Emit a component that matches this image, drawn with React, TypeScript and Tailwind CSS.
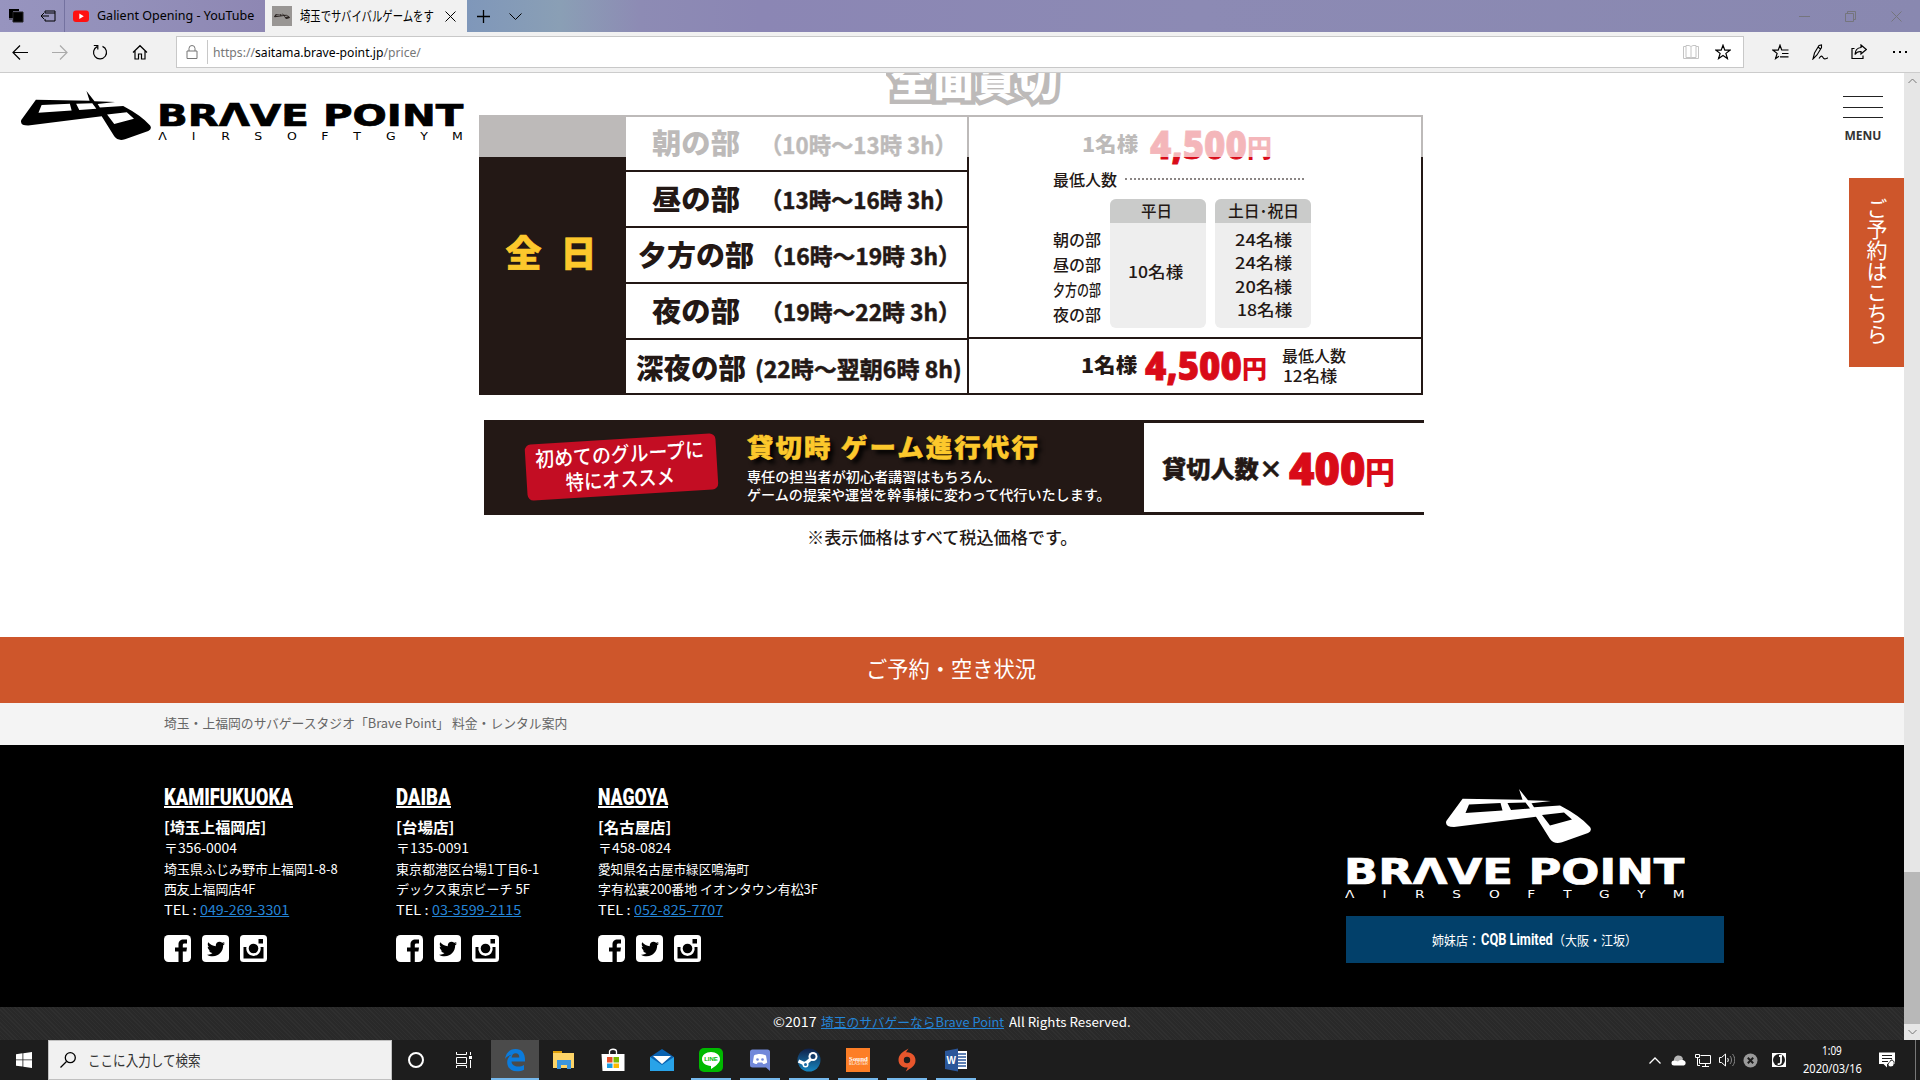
import React, { useLayoutEffect, useRef, useState } from "react";
import { FaTwitter } from "react-icons/fa";

/** Single-line text stretched horizontally so that it fills `w` pixels. */
function Fit({ w, className = "", children }: { w: number; className?: string; children: React.ReactNode }) {
  const ref = useRef<HTMLSpanElement>(null);
  const [scale, setScale] = useState(1);
  useLayoutEffect(() => {
    if (ref.current && ref.current.offsetWidth) setScale(w / ref.current.offsetWidth);
  }, [w]);
  return (
    <span className={"block shrink-0 whitespace-pre text-left " + className} style={{ width: w }}>
      <span ref={ref} className="inline-block origin-left" style={{ transform: `scaleX(${scale})` }}>
        {children}
      </span>
    </span>
  );
}

function Mark({ className }: { className: string }) {
  return (
    <svg viewBox="0 0 145 54" preserveAspectRatio="none" className={className} fill="currentColor">
      <path
        fillRule="evenodd"
        d="M16.6 9.7 L76.5 10.8 L73 0 L82 11.2 L105 12 L85.5 14.3 L88 18.3 L114 16.6 Q134 27 144 38 Q146.500 42 142 44 L116 53.200 Q108 55.500 104 50 L90 27.700 L8 38 Q-1.500 38 .3 32 Z M23 15.500 L54.500 14 L56.500 21.500 L19.500 24 Z M61.500 14 L79.500 13.500 L84 19.500 L65 21 Z M96 26 L118 23.500 L126 30.500 L104 36.500 Z"
      />
    </svg>
  );
}

const stroke = { fill: "none", stroke: "currentColor" } as const;

function TitleBar() {
  return (
    <div className="relative flex h-8 items-center bg-[linear-gradient(90deg,#9794bf_0px,#9390ba_120px,#8e87b3_265px,#7f97ba_467px,#8a9fb5_560px,#8d8bb4_640px,#8b86b4_760px,#8c8ab4_1200px,#8988b0_1920px)] text-black">
      <svg className="ml-2 h-4 w-4" viewBox="0 0 16 16">
        <path d="M1 1h10v2H5v7H1z" fill="#000" />
        <path d="M5 4h10v10H5zM1 11h3" fill="#000" stroke="#222" />
      </svg>
      <svg className="ml-4 h-4 w-4" viewBox="0 0 16 16" {...stroke}>
        <path d="M5 5V3h10v10H5v-2M5 5h10M1 8h8M4 5L1 8l3 3" />
      </svg>
      <div className="ml-2 h-8 w-px bg-[#7472a0]" />
      <div className="flex h-8 w-[200px] items-center pl-2">
        <svg className="h-4 w-4" viewBox="0 0 16 16">
          <rect y="2.500" width="16" height="11.500" rx="3" fill="#f11" />
          <path d="M6.300 5.500l4.500 2.700-4.500 2.700z" fill="#fff" />
        </svg>
        <Fit w={157} className="ml-2 text-[13px]">Galient Opening - YouTube</Fit>
      </div>
      <div className="flex h-8 w-[202px] items-center bg-[#f1f1f1] pl-[7px]">
        <div className="flex h-5 w-5 items-center justify-center bg-[#999694]">
          <Mark className="h-[6px] w-4 text-[#2b2422]" />
        </div>
        <Fit w={134} className="-mt-0.5 ml-2 text-[14px]">埼玉でサバイバルゲームをす</Fit>
        <svg className="ml-[11px] h-[11px] w-[11px]" viewBox="0 0 11 11" {...stroke}><path d="M.5.5l10 10M10.500.5l-10 10" /></svg>
      </div>
      <svg className="ml-[10px] h-[13px] w-[13px]" viewBox="0 0 13 13" {...stroke}><path d="M6.500 0v13M0 6.500h13" strokeWidth="1.300" /></svg>
      <svg className="ml-[19px] h-[7px] w-[13px]" viewBox="0 0 13 7" {...stroke}><path d="M.5.5l6 6 6-6" /></svg>
      <div className="ml-auto mr-[18px] flex items-center text-[#75757d]">
        <svg className="h-[11px] w-[11px]" viewBox="0 0 11 11" {...stroke}><path d="M0 5.500h11" /></svg>
        <svg className="ml-[35px] h-[11px] w-[11px]" viewBox="0 0 11 11" {...stroke}><path d="M.5 2.500h8v8h-8zM2.500 2.500v-2h8v8h-2" /></svg>
        <svg className="ml-[35px] h-[11px] w-[11px]" viewBox="0 0 11 11" {...stroke}><path d="M.5.5l10 10M10.500.5l-10 10" /></svg>
      </div>
    </div>
  );
}

function ToolBar() {
  return (
    <div className="flex h-[41px] items-start border-b border-[#cccccc] bg-[#f1f1f1] text-black">
      <div className="flex h-10 w-[176px] items-center">
        <svg className="ml-3 h-4 w-4" viewBox="0 0 16 16" {...stroke} strokeWidth="1.200"><path d="M1 8.500h15M8 1.500l-7 7 7 7" /></svg>
        <svg className="ml-6 h-4 w-4 text-[#aaa]" viewBox="0 0 16 16" {...stroke} strokeWidth="1.200"><path d="M0 8.500h15M8 1.500l7 7-7 7" /></svg>
        <svg className="ml-6 h-4 w-4" viewBox="0 0 16 16" {...stroke} strokeWidth="1.200"><path d="M10.500 2.400a6.500 6.500 0 1 1-5.400.2M1.800 1.500h4v4" /></svg>
        <svg className="ml-6 h-4 w-4" viewBox="0 0 16 16" {...stroke} strokeWidth="1.200"><path d="M1 8.500L8 1.700l7 6.800M3 7v8h3.500v-5h3v5H13V7" /></svg>
      </div>
      <div className="mt-1 flex h-8 w-[1568px] items-center border border-[#c8c8c8] bg-white">
        <svg className="ml-[9px] h-[14px] w-[12px] text-[#777]" viewBox="0 0 12 14" {...stroke}><path d="M1 6h10v7.500H1zM3 6V3.500a3 3 0 0 1 6 0V6" /></svg>
        <div className="ml-[9px] h-6 w-px bg-[#c8c8c8]" />
        <Fit w={208} className="ml-[5px] text-[13px] leading-[30px] text-[#777]">
          https://<span className="text-black">saitama.brave-point.jp</span>/price/
        </Fit>
        <svg className="ml-auto h-[14px] w-4 text-[#c4c4c4]" viewBox="0 0 16 14" {...stroke}><path d="M8 2v11M8 1.500L6 .5H3v12h4l1 .5 1-.5h4V.5h-3zM3 1.500H.5v12h15v-12H13" /></svg>
        <svg className="ml-4 mr-3 h-4 w-4" viewBox="0 0 16 16" {...stroke} strokeWidth="1.200"><path d="M8 1.200l1.800 4.900 5.200.1-4.100 3.200 1.500 5.100L8 11.500l-4.400 3 1.500-5.100L1 6.200l5.200-.1z" /></svg>
      </div>
      <div className="ml-7 flex h-10 items-center">
        <svg className="h-4 w-[17px]" viewBox="0 0 17 16" {...stroke} strokeWidth="1.200"><path d="M16.500 6H9.700L8 1.200 6.200 6.100 1 6.200l4.100 3.200-1.500 5.100L7 12.200M10 9.500h6.500M8 12.800h8.500" /></svg>
        <svg className="ml-[23px] h-4 w-4" viewBox="0 0 16 16" {...stroke} strokeWidth="1.100"><path d="M1 15l1.500-6L7 1.500l2.500-.5v2.500L5 11 1 15zM6 3l2.500 2M7 14.500c2-3 3-3 4-1s2 1.500 5 .3" /></svg>
        <svg className="ml-[23px] h-4 w-4" viewBox="0 0 16 16" {...stroke} strokeWidth="1.200"><path d="M3.500 4.500H1v10h11v-3M10 1l5.300 4.500L10 10V7.500C7 7.300 5.500 8 4 10.500 4.200 6 6.500 3.800 10 3.500z" /></svg>
        <svg className="ml-[26px] h-4 w-[15px]" viewBox="0 0 15 16"><path d="M0 7h2v2H0zM6 7h2v2H6zM12 7h2v2h-2z" /></svg>
      </div>
    </div>
  );
}

function Wordmark({ w, big, small }: { w: number; big: string; small: string }) {
  return (
    <div className="font-['DejaVu_Sans',sans-serif]">
      <Fit w={w + 3} className={"-ml-[2px] font-bold [-webkit-text-stroke:0.7px_currentColor] " + big}>BRΛVE POINT</Fit>
      <div className={"flex justify-between " + small} style={{ width: w }}>
        {"ΛIRSOFTGYM".split("").map((c, i) => (<span key={i} className="block scale-x-125">{c}</span>))}
      </div>
    </div>
  );
}

const slots = [
  { name: "朝の部", nl: 26, nw: 88, time: "（10時～13時 3h）", gap: 20, tw: 197 },
  { name: "昼の部", nl: 26, nw: 88, time: "（13時～16時 3h）", gap: 20, tw: 197 },
  { name: "夕方の部", nl: 12, nw: 116, time: "（16時～19時 3h）", gap: 6, tw: 201 },
  { name: "夜の部", nl: 26, nw: 88, time: "（19時～22時 3h）", gap: 20, tw: 201 },
  { name: "深夜の部", nl: 10, nw: 110, time: "(22時～翌朝6時 8h)", gap: 9, tw: 207 },
];

function Price({ lead }: { lead: number }) {
  return (
    <div className="flex items-center text-[#231815]">
      <Fit w={56} className="text-[20px] font-black leading-[34px]">1名様</Fit>
      <div style={{ width: lead }} />
      <Fit w={97} className="font-['Open_Sans',sans-serif] text-[38px] font-extrabold leading-[34px] text-[#d90b18] [-webkit-text-stroke:0.8px_#d90b18]">4,500</Fit>
      <Fit w={25} className="pt-1 text-[25px] font-black leading-[34px] text-[#d90b18]">円</Fit>
    </div>
  );
}

function PriceTable() {
  return (
    <div className="ml-[479px] flex h-[280px] w-[944px] border-2 border-[#231815] text-[#231815]">
      <div className="flex w-[145px] items-center justify-center gap-[19px] bg-[#231815] pb-[9px] pr-[5px] text-[36px] font-black leading-[40px] text-[#fcc82c] [-webkit-text-stroke:0.6px_#fcc82c]">
        <span>全</span>
        <span>日</span>
      </div>
      <div className="w-[342px]">
        {slots.map((s) => (
          <div key={s.name} className="flex h-14 items-center border-b-2 border-[#231815] pb-[3px] first:h-[55px] first:pb-[3px] last:h-[53px] last:border-b-0 last:pb-0">
            <div style={{ width: s.nl }} />
            <Fit w={s.nw} className="text-[28px] font-black leading-[40px]">{s.name}</Fit>
            <div style={{ width: s.gap }} />
            <Fit w={s.tw} className="pt-[3px] text-[23px] font-bold leading-[38px] [-webkit-text-stroke:0.5px_#231815]">{s.time}</Fit>
          </div>
        ))}
      </div>
      <div className="-ml-px flex-1 border-l-2 border-[#231815] text-[16px] font-medium">
        <div className="h-[222px] border-b-2 border-[#231815] pt-[8px]">
          <div className="pl-[113px]"><Price lead={12} /></div>
          <div className="flex h-5 items-center pl-[84px] pt-[12px]">
            <Fit w={64}>最低人数</Fit>
            <div className="ml-2 h-0 w-[179px] border-t-2 border-dotted border-[#8b8685]" />
          </div>
          <div className="mt-[16px] flex pl-[84px] leading-[25px]">
            <div className="w-[57px] pt-[28px]">
              <Fit w={48}>朝の部</Fit>
              <Fit w={48}>昼の部</Fit>
              <Fit w={48}>夕方の部</Fit>
              <Fit w={48}>夜の部</Fit>
            </div>
            <div className="h-[129px] w-24 overflow-hidden rounded-md bg-[#eee]">
              <div className="flex h-6 items-center justify-center bg-[#cacbca] pb-px pr-1"><Fit w={31}>平日</Fit></div>
              <Fit w={55} className="ml-[18px] mt-9">10名様</Fit>
            </div>
            <div className="ml-[9px] h-[129px] w-24 overflow-hidden rounded-md bg-[#eee]">
              <div className="flex h-6 items-center justify-center bg-[#cacbca] pb-px"><Fit w={71}>土日･祝日</Fit></div>
              <div className="flex flex-col items-end pr-[19px] pt-[5px] leading-[23.400px]">
                <Fit w={57}>24名様</Fit>
                <Fit w={57}>24名様</Fit>
                <Fit w={57}>20名様</Fit>
                <Fit w={55}>18名様</Fit>
              </div>
            </div>
          </div>
        </div>
        <div className="flex pl-[112px] pt-[6px]">
          <Price lead={8} />
          <div className="mt-px ml-[15px] leading-[19.500px]">
            <Fit w={64}>最低人数</Fit>
            <Fit w={54} className="ml-[1px]">12名様</Fit>
          </div>
        </div>
      </div>
    </div>
  );
}

function Banner() {
  return (
    <div className="ml-[484px] mt-[25px] flex h-[95px] w-[940px] text-white">
      <div className="flex w-[660px] bg-[#231815]">
        <div className="ml-[42px] mt-[19px] h-[56px] w-[191px] -rotate-[3.500deg] rounded-md bg-[#c30d23] pt-[2px] text-[21px] font-medium leading-[25px]">
          <Fit w={169} className="ml-[10px]">初めてのグループに</Fit>
          <Fit w={109} className="ml-[39px]">特にオススメ</Fit>
        </div>
        <div className="ml-[30px] pt-[7px]">
          <Fit w={293} className="text-[25px] font-black leading-[38px] tracking-[2px] text-[#fcc82c] [-webkit-text-stroke:0.5px_#fcc82c] [text-shadow:4px_4px_4px_#000]">貸切時 ゲーム進行代行</Fit>
          <Fit w={254} className="mt-[2px] text-[14px] font-medium leading-[18px]">専任の担当者が初心者講習はもちろん、</Fit>
          <Fit w={363} className="text-[14px] font-medium leading-[18px]">ゲームの提案や運営を幹事様に変わって代行いたします。</Fit>
        </div>
      </div>
      <div className="flex flex-1 items-center border-y-[3px] border-[#231815] pl-[18px] text-[#231815]">
        <Fit w={121} className="text-[24px] font-black leading-[40px] [-webkit-text-stroke:0.4px_#231815]">貸切人数×</Fit>
        <Fit w={76} className="ml-[6px] font-['Open_Sans',sans-serif] text-[44px] font-extrabold leading-[40px] text-[#d90b18] [-webkit-text-stroke:1px_#d90b18]">400</Fit>
        <Fit w={30} className="pt-1 text-[30px] font-black leading-[40px] text-[#d90b18]">円</Fit>
      </div>
    </div>
  );
}

const shops = [
  { en: "KAMIFUKUOKA", ew: 129, jp: "[埼玉上福岡店]", jw: 102, lines: [["〒356-0004", 73], ["埼玉県ふじみ野市上福岡1-8-8", 174], ["西友上福岡店4F", 91]], tel: "049-269-3301", w: 232 },
  { en: "DAIBA", ew: 55, jp: "[台場店]", jw: 58, lines: [["〒135-0091", 73], ["東京都港区台場1丁目6-1", 143], ["デックス東京ビーチ 5F", 134]], tel: "03-3599-2115", w: 202 },
  { en: "NAGOYA", ew: 70, jp: "[名古屋店]", jw: 73, lines: [["〒458-0824", 73], ["愛知県名古屋市緑区鳴海町", 151], ["字有松裏200番地 イオンタウン有松3F", 220]], tel: "052-825-7707", w: 260 },
];

function Footer() {
  return (
    <div className="flex h-[262px] bg-black pl-[164px] text-white">
      {shops.map((s) => (
        <div key={s.en} className="pt-[40px] text-[13px] leading-[20.500px]" style={{ width: s.w }}>
          <div className="border-b-2 border-white" style={{ width: s.ew }}>
            <Fit w={s.ew} className="h-[21px] font-['Roboto',sans-serif] text-[24px] font-black leading-[24px]">{s.en}</Fit>
          </div>
          <Fit w={s.jw} className="mt-[8px] text-[15px] font-bold leading-[22px]">{s.jp}</Fit>
          {s.lines.map(([t, w]) => (<Fit key={t} w={w as number}>{t}</Fit>))}
          <div className="flex">
            <Fit w={36}>TEL : </Fit>
            <Fit w={89} className="text-[#2484d6] [&>span]:underline">{s.tel}</Fit>
          </div>
          <div className="mt-[15px] flex gap-[11px]">
            <svg className="h-[27px] w-[27px]" viewBox="0 0 27 27">
              <rect width="27" height="27" rx="4.500" fill="#fff" />
              <path d="M14.500 27V16.500H11v-4h3.500V9.500c0-3.500 2-5 5-5H23v4h-2.300c-1.500 0-1.900.6-1.900 1.800v2.200H23l-.6 4h-3.600V27z" fill="#000" />
            </svg>
            <div className="flex h-[27px] w-[27px] items-center justify-center rounded bg-white text-black">
              <FaTwitter className="h-[18px] w-[18px]" />
            </div>
            <svg className="h-[27px] w-[27px]" viewBox="0 0 27 27">
              <rect width="27" height="27" rx="3.500" fill="#fff" />
              <path d="M18.500 4h4.500v4.500h-4.500zM3.500 12h3a7.200 7.200 0 1 0 14 0h3v11.500h-20z" fill="#000" />
              <circle cx="13.500" cy="13.500" r="4.800" fill="#000" />
            </svg>
          </div>
        </div>
      ))}
      <div className="ml-[488px] pt-11">
        <Mark className="ml-[100px] h-[54px] w-[145px]" />
        <div className="mt-[11px]">
          <Wordmark w={338} big="text-[35px] leading-[36px] h-[36px]" small="mt-0 text-[11px] leading-[9px]" />
        </div>
        <div className="mt-[17px] flex h-[47px] w-[378px] items-center bg-[#02406a] pl-[86px] text-[13px]">
          <Fit w={48}>姉妹店：</Fit>
          <Fit w={72} className="ml-[1px] font-['Roboto',sans-serif] text-[16px] font-bold">CQB Limited</Fit>
          <Fit w={84}>（大阪・江坂）</Fit>
        </div>
      </div>
    </div>
  );
}

function Page() {
  return (
    <div className="relative flow-root h-[967px] w-[1904px] shrink-0 overflow-hidden bg-white font-['Noto_Sans_CJK_JP',sans-serif]">
      <div className="flow-root h-[42px] pl-[891px]">
        <Fit w={167} className="-mt-[25px] text-[42px] font-black leading-[60px] text-white [-webkit-text-stroke:9px_#231815] [paint-order:stroke_fill]">全面貸切</Fit>
      </div>
      <PriceTable />
      <Banner />
      <Fit w={270} className="ml-[807px] mt-[11px] text-[17px] font-medium leading-[22px] text-[#231815]">※表示価格はすべて税込価格です。</Fit>
      <div className="mt-[89px] flex h-[66px] items-center justify-center bg-[#ce562b] pb-[5px] text-[22px] text-white">
        <Fit w={170} className="-ml-[3px]">ご予約・空き状況</Fit>
      </div>
      <div className="flex h-[42px] items-center bg-[#f4f4f4] pl-[164px] text-[13px] text-[#666]">
        <Fit w={403} className="-mt-0.5">埼玉・上福岡のサバゲースタジオ「Brave Point」 料金・レンタル案内</Fit>
      </div>
      <Footer />
      <div className="flex h-[33px] items-center bg-[#2b2b2b] bg-[repeating-linear-gradient(45deg,#2f2f2f_0px,#2f2f2f_1px,#292929_1px,#292929_3px)] pl-[773px] text-[13px] text-white">
        <Fit w={44} className="-mt-1">©2017</Fit>
        <Fit w={183} className="-mt-1 ml-1 text-[#2484d6] [&>span]:underline">埼玉のサバゲーならBrave Point</Fit>
        <Fit w={122} className="-mt-1 ml-[5px]">All Rights Reserved.</Fit>
      </div>

      <div className="absolute inset-x-0 top-0 flex h-[84px] bg-white/70 text-black">
        <Mark className="ml-[21px] mt-[18px] h-[49px] w-[130px]" />
        <div className="ml-2 mt-[26px]">
          <Wordmark w={303} big="text-[31px] leading-[32px] h-[32px]" small="mt-[2px] text-[10px] leading-[8px]" />
        </div>
        <div className="ml-auto mr-[21px] flex w-10 flex-col items-center pt-[23px]">
          <div className="h-px w-10 bg-[#222]" />
          <div className="mt-[10px] h-px w-10 bg-[#222]" />
          <div className="mt-[9px] h-px w-10 bg-[#222]" />
          <Fit w={37} className="mt-[10px] font-['Open_Sans',sans-serif] text-[12px] font-bold leading-[16px] text-[#333]">MENU</Fit>
        </div>
      </div>
      <div className="absolute right-0 top-[105px] flex h-[189px] w-[55px] justify-center bg-[#ce562b] pb-[2px] text-[21px] leading-[55px] text-white [writing-mode:vertical-rl]">
        ご予約はこちら
      </div>
    </div>
  );
}

function ScrollBar() {
  return (
    <div className="flex h-[967px] w-4 flex-col items-center bg-[#e6e6e6] text-[#777]">
      <svg className="mt-[5px] h-[6px] w-[9px]" viewBox="0 0 9 6" {...stroke}><path d="M.5 5l4-4 4 4" /></svg>
      <div className="mt-[788px] h-[152px] w-4 bg-[#b8b8b8]" />
      <svg className="mt-[5px] h-[6px] w-[9px]" viewBox="0 0 9 6" {...stroke}><path d="M.5 1l4 4 4-4" /></svg>
    </div>
  );
}

const apps: { id: string; open: boolean; icon: React.ReactNode }[] = [
  { id: "edge", open: true, icon: <path d="M2 11C3 4.500 7 1 12.500 1 19 1 22.500 5.500 22 13.500H8.500c.2 3.500 3.300 5 6.500 5 2.300 0 4.300-.5 6-1.500v4.800c-2 1-4.300 1.500-7 1.500-6 0-9.800-3.500-9.800-9 0-3.300 1.600-6 4.500-7.500-3 .6-5.200 2-6.700 4.200zM8.600 9.500h7.700c0-3-1.400-4.300-3.600-4.300-2.300 0-3.700 1.500-4.100 4.300z" fill="#0b7bdc" fillRule="evenodd" /> },
  { id: "files", open: false, icon: <><path d="M1 3h9v4H1z" fill="#e0a008" /><path d="M1 5h21v15H1z" fill="#fdd467" /><path d="M5 12h14v9h-4v-4H9v4H5z" fill="#3b95dd" /></> },
  { id: "store", open: false, icon: <><path d="M8.500 7V3.500C8.500.5 15.500.5 15.500 3.500V7" fill="none" stroke="#fff" strokeWidth="1.300" /><path d="M.5 6h23v17H1.500z" fill="#fff" /><path d="M6 9h5.500v5.500H6z" fill="#e8502a" /><path d="M12.500 9H18v5.500h-5.500z" fill="#7eb900" /><path d="M6 15.500h5.500V20H6z" fill="#1b9de2" /><path d="M12.500 15.500H18V20h-5.500z" fill="#fdb900" /></> },
  { id: "mail", open: false, icon: <><path d="M0 9L12 1l12 8v14H0z" fill="#0a62b0" /><path d="M3 8h18l-9 8z" fill="#fff" /><path d="M0 9l12 8 12-8v14H0z" fill="#29a3e8" /></> },
  { id: "line", open: true, icon: <><rect width="24" height="24" rx="5" fill="#00b900" /><path d="M12 4c5 0 9 3 9 7 0 4.500-6 8-9 10v-3c-5-.3-9-3-9-7s4-7 9-7z" fill="#fff" /><text x="12" y="13.300" fontSize="6" fontWeight="700" fill="#00b900" textAnchor="middle" fontFamily="Liberation Sans">LINE</text></> },
  { id: "discord", open: true, icon: <><path d="M4.500 1.500h15a2.500 2.500 0 0 1 2.500 2.500v19l-4-3.500H4.500A2.500 2.500 0 0 1 2 17V4a2.500 2.500 0 0 1 2.500-2.500z" fill="#7289da" /><path d="M6 7.500c3-2 9-2 12 0l1.200 7c-1.600 1.300-3 1.500-4 1.500l-1-1.500H9.800l-1 1.500c-1 0-2.400-.2-4-1.500z" fill="#fff" /><circle cx="9.500" cy="11.500" r="1.300" fill="#7289da" /><circle cx="14.500" cy="11.500" r="1.300" fill="#7289da" /></> },
  { id: "steam", open: true, icon: <><defs><linearGradient id="st" x2="0" y2="1"><stop stopColor="#102048" /><stop offset="1" stopColor="#1686c0" /></linearGradient></defs><circle cx="12" cy="12" r="11.500" fill="url(#st)" /><path d="M1.500 13l6.500 3 7-6" stroke="#fff" strokeWidth="3.500" fill="none" /><circle cx="16" cy="8.500" r="4.500" fill="#fff" /><circle cx="16" cy="8.500" r="2.500" fill="#123a68" /><circle cx="8.500" cy="16.500" r="3" fill="#fff" /><circle cx="8.500" cy="16.500" r="1.500" fill="#1a6aa5" /></> },
  { id: "sound", open: true, icon: <><path d="M0 0h24v24H0z" fill="#fd7e26" /><text x="3" y="12.500" fontSize="7" fontWeight="700" fill="#fff" textLength="19" lengthAdjust="spacingAndGlyphs" fontFamily="Liberation Serif">Sound</text><text x="3" y="17" fontSize="4.500" fontWeight="700" fill="#ffd9bd" textLength="19" lengthAdjust="spacingAndGlyphs" fontFamily="Liberation Sans">BLASTER</text></> },
  { id: "origin", open: true, icon: <><path d="M13.500.5L11 4.200c5.500-.6 9.500 3.200 9.500 8.200 0 5.500-4.500 7.500-9.700 11.100l2-4C7 20 3.500 16.500 3.500 12c0-5.500 4.500-8.500 10-11.500z" fill="#e8562c" /><circle cx="12" cy="12" r="3.200" fill="#1e1c1c" /></> },
  { id: "word", open: true, icon: <><path d="M12 3h11v18H12z" fill="#fff" /><path d="M14 6h8M14 9h8M14 12h8M14 15h8M14 18h8" stroke="#2b579a" strokeWidth="1.300" /><path d="M1 3l13-2.500v23L1 21z" fill="#2b579a" /><text x="7.300" y="15.500" fontSize="10" fontWeight="700" fill="#fff" textAnchor="middle" fontFamily="Liberation Sans">W</text></> },
];

function TaskBar() {
  return (
    <div className="flex h-10 bg-[#1d1d1d] text-white">
      <div className="flex w-12 items-center justify-center">
        <svg className="h-4 w-4" viewBox="0 0 16 16" fill="#fff"><path d="M0 2.200L6.500 1.300v6.200H0zM7.300 1.200L16 0v7.500H7.300zM0 8.300h6.500v6.300L0 13.700zM7.300 8.300H16V16l-8.700-1.200z" /></svg>
      </div>
      <div className="flex w-[344px] items-center border border-[#c0c0c0] bg-[#f1f1f1] pl-[11px] text-[#333]">
        <svg className="h-4 w-4 text-black" viewBox="0 0 16 16" {...stroke} strokeWidth="1.300"><circle cx="10.300" cy="5.700" r="5" /><path d="M6.500 9.500L.5 15.500" /></svg>
        <Fit w={113} className="ml-3 font-['Noto_Sans_CJK_JP',sans-serif] text-[15px] leading-[34px]">ここに入力して検索</Fit>
      </div>
      <div className="flex w-12 items-center justify-center">
        <div className="h-4 w-4 rounded-full border-2 border-white" />
      </div>
      <div className="flex w-12 items-center justify-center">
        <svg className="h-4 w-4" viewBox="0 0 16 16" {...stroke}><path d="M.5 0v2.500h10V0M.5 5.500h10v6H.5zM.5 16v-2.500h10V16M14.500 0v3M14.500 8v8" /><path d="M13 4h3v3h-3z" fill="#fff" stroke="none" /></svg>
      </div>
      <div className="ml-[3px] flex gap-px">
        {apps.map((a, i) => (
          <div key={a.id} className={i === 0 ? "flex w-12 flex-col items-center bg-[#4b4b4b]" : "flex w-12 flex-col items-center"}>
            <svg className="mt-2 h-6 w-6" viewBox="0 0 24 24">{a.icon}</svg>
            {a.open && <div className={i === 0 ? "mt-auto h-0.5 w-12 bg-[#76b9ed]" : "mt-auto h-0.5 w-10 bg-[#76b9ed]"} />}
          </div>
        ))}
      </div>
      <div className="ml-auto flex items-center">
        <svg className="h-[7px] w-3" viewBox="0 0 12 7" {...stroke} strokeWidth="1.300"><path d="M.5 6.500L6 1l5.500 5.500" /></svg>
        <svg className="ml-[10px] h-4 w-4" viewBox="0 0 16 16"><path d="M3 9a4.500 4.500 0 0 1 9-2l-4 6H2z" fill="#b5b5b5" /><path d="M3 13.500a2.500 2.500 0 0 1 0-5c2 0 3 1 4 1 1.500-1.500 4-2.500 6-1a2.700 2.700 0 0 1 0 5z" fill="#fff" /></svg>
        <svg className="ml-2 h-4 w-4" viewBox="0 0 16 16" {...stroke}><path d="M5.500 3.500h10v8h-11V7M10.500 12v2.500M7 14.500h7M.5 2.500h4v3h-4zM2.500 5.500v8H5" /></svg>
        <svg className="ml-2 h-4 w-4" viewBox="0 0 16 16" {...stroke}><path d="M.5 5.500h2l4-3.500v12l-4-3.500h-2zM8.500 6c1 1 1 3 0 4" /><path d="M11 4c2 2 2 6 0 8M13.500 2c3 3.500 3 8.500 0 12" stroke="#888" /></svg>
        <svg className="ml-2 h-[15px] w-[15px]" viewBox="0 0 15 15"><circle cx="7.500" cy="7.500" r="7" fill="#9a9a9a" /><path d="M4.800 4.800l5.400 5.400M10.200 4.800l-5.400 5.400" stroke="#1d1d1d" strokeWidth="2" /></svg>
        <svg className="ml-[14px] h-[14px] w-[14px]" viewBox="0 0 14 14"><path d="M0 0h14v14H0z" fill="#fff" /><circle cx="7" cy="7" r="6" fill="#1d1d1d" /><path d="M7 3h3M9 3v5.500c0 2-1 2.800-3.300 2.500" stroke="#fff" strokeWidth="1.800" fill="none" /></svg>
        <div className="ml-4 flex w-[60px] flex-col items-center text-[12px] leading-[18px]">
          <Fit w={20}>1:09</Fit>
          <Fit w={59}>2020/03/16</Fit>
        </div>
        <svg className="ml-[17px] h-4 w-4" viewBox="0 0 16 16"><path d="M0 .5h16V12H8v3.500L4.500 12H0z" fill="#fff" /><path d="M3 3.500h10M3 6.500h10M3 9.500h6" stroke="#1d1d1d" /><path d="M12 8c3 0 4 3 2.500 5.500S9 15 9 12.500 12 10 12 8z" fill="#fff" stroke="#1d1d1d" /></svg>
        <div className="ml-5 mr-1 h-10 w-px bg-[#777]" />
      </div>
    </div>
  );
}

export default function App() {
  return (
    <div className="h-[1080px] w-[1920px] overflow-hidden bg-white font-['Noto_Sans','Noto_Sans_CJK_JP',sans-serif]">
      <TitleBar />
      <ToolBar />
      <div className="flex">
        <Page />
        <ScrollBar />
      </div>
      <TaskBar />
    </div>
  );
}
